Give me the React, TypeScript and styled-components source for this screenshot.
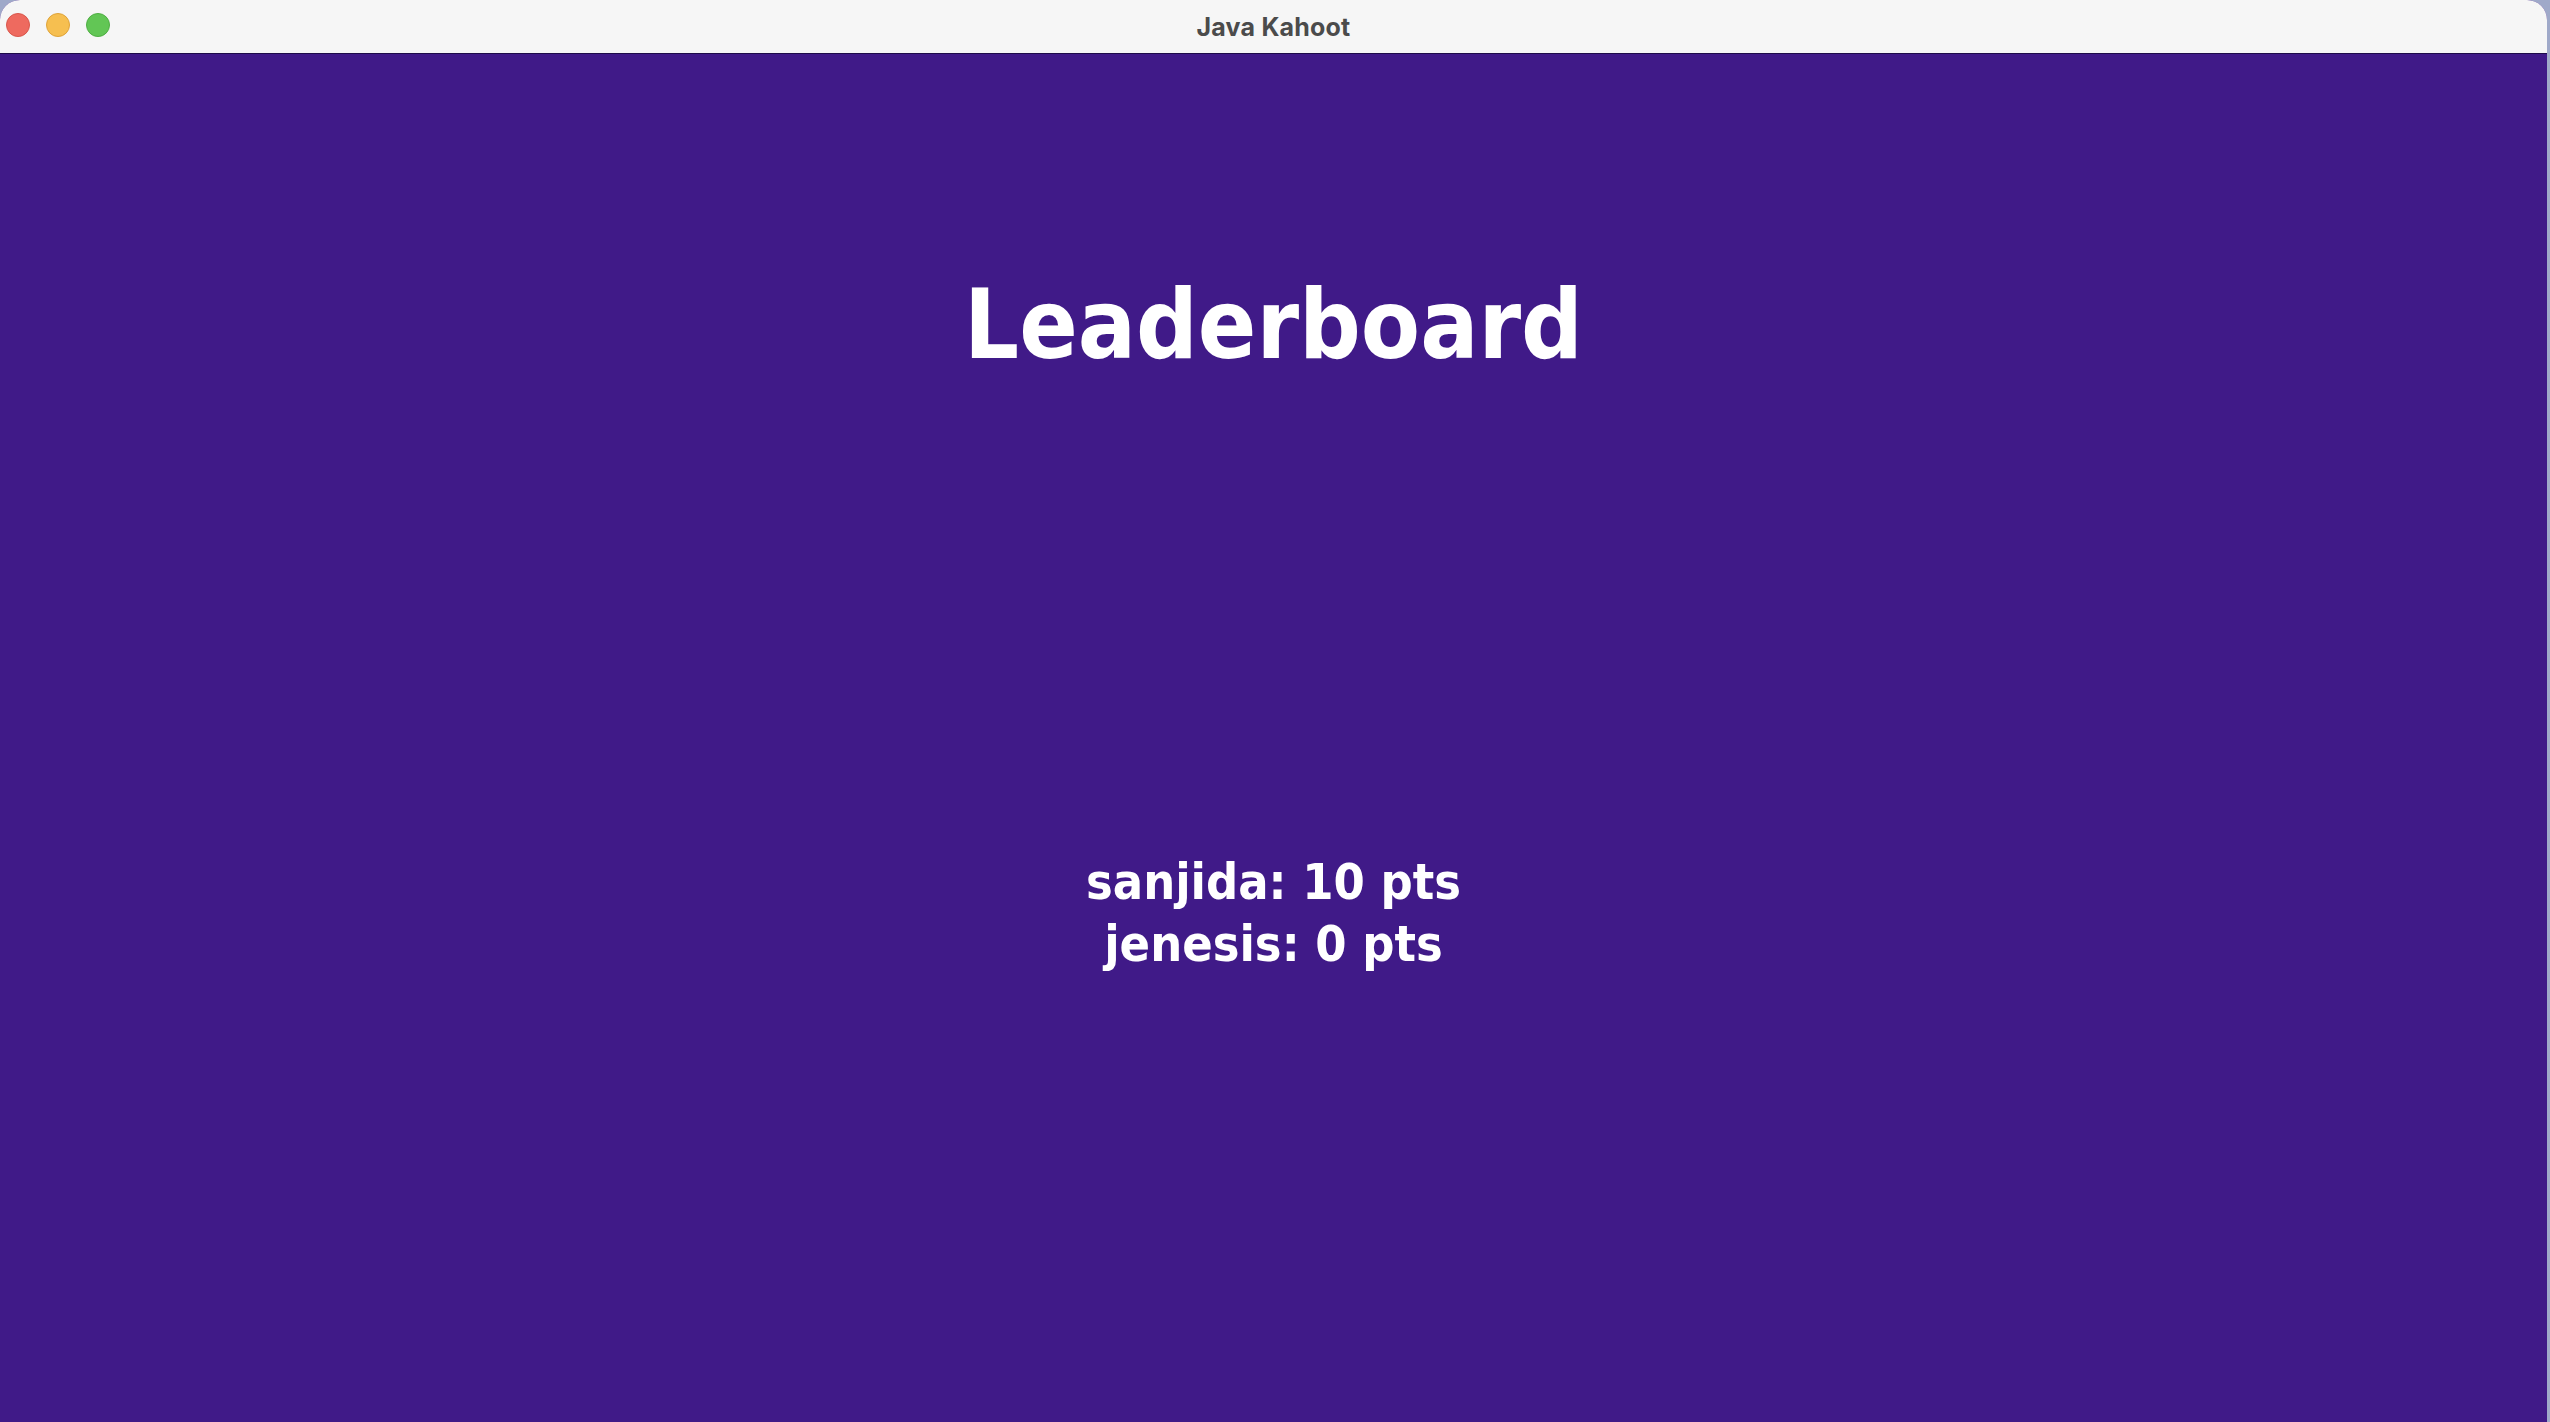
import React from "react";
import styled, { createGlobalStyle } from "styled-components";

const GlobalStyle = createGlobalStyle`
  html, body {
    margin: 0;
    padding: 0;
    height: 100%;
    background: #9fa9c9;
    overflow: hidden;
  }
  #root {
    height: 100%;
  }
`;

const Window = styled.div`
  display: flex;
  flex-direction: column;
  width: calc(100% - 3px);
  height: 100vh;
  border-top-left-radius: 20px;
  border-top-right-radius: 20px;
  overflow: hidden;
  background: #401a88;
`;

const TitleBar = styled.div`
  position: relative;
  display: flex;
  align-items: center;
  justify-content: center;
  height: 53px;
  flex: none;
  background: #f6f6f6;
  border-bottom: 1px solid #1e0b4a;
`;

const Lights = styled.div`
  position: absolute;
  left: 6px;
  top: 13px;
  display: flex;
  gap: 16px;
`;

const Light = styled.span<{ $fill: string; $ring: string }>`
  display: block;
  width: 24px;
  height: 24px;
  border-radius: 50%;
  box-sizing: border-box;
  background: ${(p) => p.$fill};
  border: 1px solid ${(p) => p.$ring};
`;

const WindowTitle = styled.span`
  font-family: Inter, "Liberation Sans", sans-serif;
  font-weight: 700;
  font-size: 25px;
  color: #4b4b4b;
  letter-spacing: 0.2px;
  margin-top: 1px;
`;

const Content = styled.main`
  flex: 1;
  display: flex;
  flex-direction: column;
  align-items: center;
  color: #ffffff;
  font-family: "DejaVu Sans Condensed", "DejaVu Sans", sans-serif;
  font-stretch: condensed;
  font-weight: 700;
`;

const Heading = styled.h1`
  margin: 223px 0 0;
  font-size: 96px;
  line-height: 96px;
  font-weight: 700;
`;

const Scores = styled.div`
  flex: 1;
  display: flex;
  flex-direction: column;
  align-items: center;
  justify-content: center;
  margin-top: 31px;
`;

const ScoreLine = styled.div`
  font-size: 50px;
  line-height: 62px;
  white-space: pre;
`;

const players = [
  { name: "sanjida", points: 10 },
  { name: "jenesis", points: 0 },
];

export default function App() {
  return (
    <>
      <GlobalStyle />
      <Window>
        <TitleBar>
          <Lights>
            <Light $fill="#ee6a5f" $ring="#d8574c" />
            <Light $fill="#f6bf50" $ring="#dea33a" />
            <Light $fill="#62c655" $ring="#4fae43" />
          </Lights>
          <WindowTitle>Java Kahoot</WindowTitle>
        </TitleBar>
        <Content>
          <Heading>Leaderboard</Heading>
          <Scores>
            {players.map((p) => (
              <ScoreLine key={p.name}>
                {p.name}: {p.points} pts
              </ScoreLine>
            ))}
          </Scores>
        </Content>
      </Window>
    </>
  );
}
